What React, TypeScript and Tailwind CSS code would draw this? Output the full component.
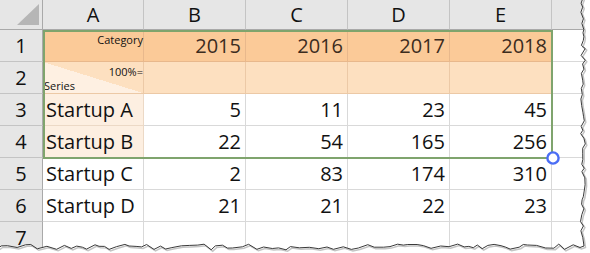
import React from "react"

type tRow = {
    n: number,
    label: string,
    values: (number | string)[],
    tint: boolean
}

const cols = ["A", "B", "C", "D", "E", ""]

const rows: tRow[] = [
    { n: 3, label: "Startup A", values: [5, 11, 23, 45], tint: true },
    { n: 4, label: "Startup B", values: [22, 54, 165, 256], tint: true },
    { n: 5, label: "Startup C", values: [2, 83, 174, 310], tint: false },
    { n: 6, label: "Startup D", values: [21, 21, 22, 23], tint: false },
]

// small seeded random so the torn edge is the same on every run
function rand(seed: number) {
    let s = seed
    return () => {
        s = (s * 9301 + 49297) % 233280
        return s / 233280
    }
}

function tornEdge() {
    const r = rand(7)
    const pts: [number, number][] = []
    for (let y = -2; y < 244; y += 3 + r() * 4) {
        pts.push([583 + (r() - 0.5) * 5, y])
    }
    pts.push([584, 246])
    for (let x = 580; x > -4; x -= 4 + r() * 6) {
        pts.push([x, 247 + (r() - 0.5) * 6])
    }
    pts.push([-4, 248])
    return pts
}

function TornOverlay() {
    const pts = tornEdge()
    const line = pts.map((p, i) => (i === 0 ? "M" : "L") + p[0].toFixed(1) + " " + p[1].toFixed(1)).join(" ")
    const fill = line + " L -4 260 L 600 260 L 600 -4 Z"
    return (
        <svg className="absolute inset-0 pointer-events-none" width={590} height={253} viewBox="0 0 590 253">
            <path d={fill} fill="#ffffff" />
            <path d={line} fill="none" stroke="#c4c4c4" strokeWidth={1.5} transform="translate(1.5 1.5)" />
            <path d={line} fill="none" stroke="#3a3a3a" strokeWidth={1} />
        </svg>
    )
}

export default function App() {
    const font = { fontFamily: '"Open Sans", "Liberation Sans", sans-serif' }
    return (
        <div className="relative w-[590px] h-[253px] overflow-hidden bg-white" style={font}>
            <div className="grid grid-cols-[43px_101px_102px_102px_102px_102px_1fr] grid-rows-[30px_repeat(7,32px)] text-[20px] text-[#111]">
                {/* header row */}
                <div className="relative bg-[#e6e6e6] border-r border-b border-[#a9a9a9]">
                    <div className="absolute left-[17px] top-[4px] w-[22px] h-[21px] bg-[#b6b6b6] [clip-path:polygon(100%_0,100%_100%,0_100%)]" />
                </div>
                {cols.map((c, i) => (
                    <div key={i} className="bg-[#e6e6e6] border-r border-b border-r-[#c4c4c4] border-b-[#a9a9a9] flex items-center justify-center leading-none">
                        {c}
                    </div>
                ))}

                {/* row 1 */}
                <div className="bg-[#e6e6e6] border-r border-b border-r-[#a9a9a9] border-b-[#c4c4c4] flex items-center justify-center">1</div>
                <div className="bg-[#fbca98] border-r border-b border-[#e8b88c] text-[11px] leading-none text-right pt-[4px] text-[#111]">Category</div>
                {["2015", "2016", "2017", "2018"].map((y) => (
                    <div key={y} className="bg-[#fbca98] border-r border-b border-[#e8b88c] flex items-center justify-end pr-[4px] text-[#3c2c1e]">{y}</div>
                ))}
                <div className="border-r border-b border-[#d9d9d9]" />

                {/* row 2 */}
                <div className="bg-[#e6e6e6] border-r border-b border-r-[#a9a9a9] border-b-[#c4c4c4] flex items-center justify-center">2</div>
                <div className="relative bg-[linear-gradient(to_top_right,#fef0e2_50%,#fde0c0_50%)] border-r border-b border-[#ecc9a6] text-[11px] leading-none">
                    <div className="absolute right-0 top-[4px]">100%=</div>
                    <div className="absolute left-[1px] bottom-[2px]">Series</div>
                </div>
                {[0, 1, 2, 3].map((i) => (
                    <div key={i} className="bg-[#fde0c0] border-r border-b border-[#ecc9a6]" />
                ))}
                <div className="border-r border-b border-[#d9d9d9]" />

                {/* data rows */}
                {rows.map((r) => (
                    <React.Fragment key={r.n}>
                        <div className="bg-[#e6e6e6] border-r border-b border-r-[#a9a9a9] border-b-[#c4c4c4] flex items-center justify-center">{r.n}</div>
                        <div className={(r.tint ? "bg-[#fdefe1] border-[#ecd9c6] " : "border-[#d9d9d9] ") + "border-r border-b flex items-center pl-[3px]"}>
                            {r.label}
                        </div>
                        {r.values.map((v, i) => (
                            <div key={i} className="border-r border-b border-[#d9d9d9] flex items-center justify-end pr-[4px]">{v}</div>
                        ))}
                        <div className="border-r border-b border-[#d9d9d9]" />
                    </React.Fragment>
                ))}

                {/* row 7 */}
                <div className="bg-[#e6e6e6] border-r border-b border-r-[#a9a9a9] border-b-[#c4c4c4] flex items-center justify-center">7</div>
                {cols.map((_, i) => (
                    <div key={i} className="border-r border-b border-[#d9d9d9]" />
                ))}
            </div>

            {/* selection range A1:E4 */}
            <div className="absolute left-[43px] top-[30px] w-[510px] h-[129px] border-2 border-[#7fa46d] pointer-events-none" />
            <svg className="absolute left-[545px] top-[150px]" width={16} height={16} viewBox="0 0 16 16">
                <circle cx={8} cy={8} r={5.6} fill="#ffffff" stroke="#4b6ef5" strokeWidth={2.4} />
            </svg>

            <TornOverlay />
        </div>
    )
}
